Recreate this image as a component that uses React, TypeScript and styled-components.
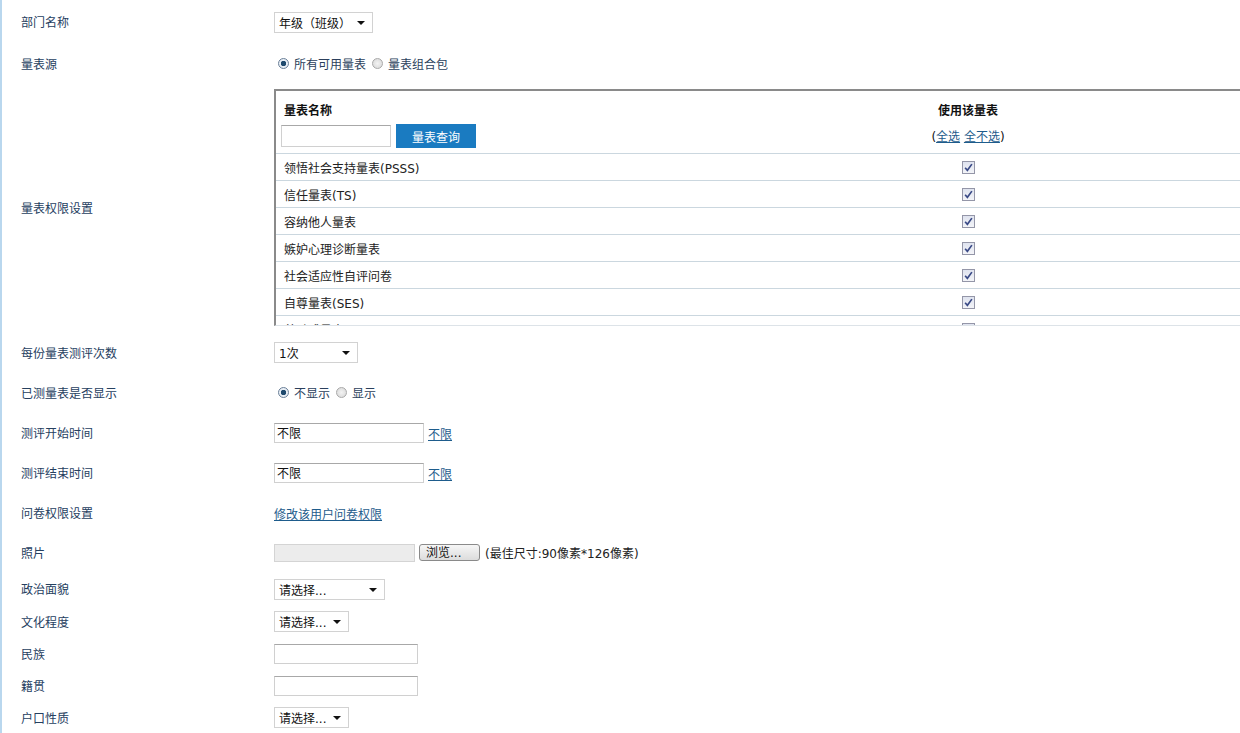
import * as React from 'react';
import styled, { createGlobalStyle } from 'styled-components';

const GlobalStyle = createGlobalStyle`
  html, body {
    margin: 0;
    padding: 0;
    background: #fff;
    overflow: hidden;
  }
  body {
    font-family: 'DejaVu Sans', 'Noto Sans CJK SC', sans-serif;
    font-size: 12px;
    color: #222;
  }
`;

const Page = styled.div`
  position: relative;
  width: 1240px;
  height: 733px;
  border-left: 2px solid #b9d7ee;
  box-sizing: border-box;
  overflow: hidden;
`;

const RailMark = styled.span<{ $top: number; $h: number }>`
  position: absolute;
  left: -2px;
  top: ${({ $top }) => $top}px;
  width: 2px;
  height: ${({ $h }) => $h}px;
  background: #5b9fd3;
`;

const Row = styled.div<{ $h: number; $pad?: number; $padBottom?: number }>`
  display: grid;
  grid-template-columns: 272px 1fr;
  align-items: center;
  height: ${({ $h }) => $h}px;
  padding-top: ${({ $pad }) => $pad ?? 0}px;
  padding-bottom: ${({ $padBottom }) => $padBottom ?? 0}px;
  box-sizing: border-box;
`;

const Label = styled.div`
  padding-left: 19px;
  padding-top: 3px;
  color: #26405f;
  font-size: 12px;
  line-height: 16px;
`;

const Value = styled.div<{ $top?: boolean }>`
  display: flex;
  align-items: center;
  align-self: ${({ $top }) => ($top ? 'start' : 'center')};
  gap: 4px;
  min-width: 0;
  padding-top: 1px;
`;

const Select = styled.div<{ $w: number }>`
  position: relative;
  width: ${({ $w }) => $w}px;
  height: 21px;
  box-sizing: border-box;
  border: 1px solid #d2d2d2;
  display: flex;
  align-items: center;
  padding-left: 4px;
  color: #111;
  background: #fff;
  &::after {
    content: '';
    position: absolute;
    right: 7px;
    top: 8px;
    border-left: 4px solid transparent;
    border-right: 4px solid transparent;
    border-top: 4px solid #111;
  }
`;

const RadioGroup = styled.div`
  display: flex;
  align-items: center;
  padding-left: 4px;
  color: #2b3f5c;
`;

const RadioItem = styled.label`
  display: flex;
  align-items: center;
  margin-right: 6px;
`;

const RadioDot = styled.span<{ $on?: boolean }>`
  width: 11px;
  height: 11px;
  border-radius: 50%;
  box-sizing: border-box;
  border: 1px solid ${({ $on }) => ($on ? '#6a7f98' : '#a9a9a9')};
  background: ${({ $on }) =>
    $on
      ? 'radial-gradient(circle, #1f4a6e 0 2.5px, #e8eef5 3px)'
      : 'radial-gradient(circle, #f3f3f3, #d6d6d6)'};
  margin-right: 5px;
`;

const Box = styled.div`
  width: 1000px;
  height: 237px;
  border-top: 2px solid #8a8a8a;
  border-left: 2px solid #8a8a8a;
  border-bottom: 1px solid #dde3e8;
  box-sizing: border-box;
  overflow: hidden;
`;

const TableRow = styled.div<{ $head?: boolean }>`
  display: flex;
  height: ${({ $head }) => ($head ? 63 : 27)}px;
  border-bottom: 1px solid #cbd7df;
  box-sizing: border-box;
`;

const NameCell = styled.div`
  width: 578px;
  display: flex;
  align-items: center;
  padding-left: 8px;
  box-sizing: border-box;
`;

const UseCell = styled.div`
  width: 228px;
  display: flex;
  align-items: center;
  justify-content: center;
`;

const HeadName = styled.div`
  width: 578px;
  padding: 12px 0 0 5px;
  box-sizing: border-box;
`;

const HeadUse = styled.div`
  width: 228px;
  padding-top: 12px;
  display: flex;
  flex-direction: column;
  align-items: center;
`;

const HeadTitle = styled.div<{ $indent?: number }>`
  font-weight: bold;
  line-height: 16px;
  color: #111;
  padding-left: ${({ $indent }) => $indent ?? 0}px;
`;

const SearchLine = styled.div`
  display: flex;
  align-items: center;
  gap: 5px;
  margin-top: 5px;
`;

const TextInput = styled.div<{ $w: number; $h?: number }>`
  width: ${({ $w }) => $w}px;
  height: ${({ $h }) => $h ?? 20}px;
  box-sizing: border-box;
  border: 1px solid #d0d0d0;
  border-top-color: #a8a8a8;
  display: flex;
  align-items: center;
  padding-left: 2px;
  color: #111;
  background: #fff;
`;

const BlueButton = styled.div`
  width: 80px;
  height: 24px;
  background: #1a7bc1;
  color: #fff;
  display: flex;
  align-items: center;
  justify-content: center;
`;

const PickLine = styled.div`
  margin-top: 10px;
  line-height: 16px;
  color: #111;
`;

const Link = styled.a`
  color: #1e5c8c;
  text-decoration: underline;
  cursor: pointer;
  padding-top: 2px;
`;

const Check = styled.span`
  width: 13px;
  height: 13px;
  box-sizing: border-box;
  border: 1px solid #9496a8;
  background: linear-gradient(#dfe3ef, #f3f4f8);
  display: flex;
  align-items: center;
  justify-content: center;
`;

const FileBox = styled.div`
  width: 141px;
  height: 18px;
  background: #ececec;
  border: 1px solid #d4d4d4;
  box-sizing: border-box;
`;

const FileButton = styled.div`
  width: 61px;
  height: 17px;
  box-sizing: border-box;
  border: 1px solid #8a8a8a;
  border-radius: 3px;
  background: linear-gradient(#f6f6f6, #dcdcdc);
  display: flex;
  align-items: center;
  padding-left: 6px;
  color: #111;
  line-height: 14px;
`;

const Hint = styled.span`
  color: #222;
  margin-left: 1px;
`;

const scales = [
  '领悟社会支持量表(PSSS)',
  '信任量表(TS)',
  '容纳他人量表',
  '嫉妒心理诊断量表',
  '社会适应性自评问卷',
  '自尊量表(SES)',
  '羞耻感量表(ISS)',
];

function CheckMark() {
  return (
    <Check>
      <svg width='9' height='9' viewBox='0 0 8 8'>
        <path d='M1 4.2 L3 6.5 L7 1' stroke='#3a4a86' strokeWidth='1.5' fill='none' />
      </svg>
    </Check>
  );
}

function ScaleTable() {
  return (
    <Box>
      <TableRow $head>
        <HeadName>
          <HeadTitle $indent={3}>量表名称</HeadTitle>
          <SearchLine>
            <TextInput $w={110} $h={22} />
            <BlueButton>量表查询</BlueButton>
          </SearchLine>
        </HeadName>
        <HeadUse>
          <HeadTitle>使用该量表</HeadTitle>
          <PickLine>
            (<Link>全选</Link> <Link>全不选</Link>)
          </PickLine>
        </HeadUse>
      </TableRow>
      {scales.map((s) => (
        <TableRow key={s}>
          <NameCell>{s}</NameCell>
          <UseCell>
            <CheckMark />
          </UseCell>
        </TableRow>
      ))}
    </Box>
  );
}

export default function App() {
  return (
    <>
      <GlobalStyle />
      <Page>
        <RailMark $top={0} $h={35} />
        <RailMark $top={133} $h={10} />
        <RailMark $top={151} $h={11} />

        <Row $h={43}>
          <Label>部门名称</Label>
          <Value>
            <Select $w={99}>年级（班级）</Select>
          </Value>
        </Row>
        <Row $h={40}>
          <Label>量表源</Label>
          <Value>
            <RadioGroup>
              <RadioItem>
                <RadioDot $on />
                所有可用量表
              </RadioItem>
              <RadioItem>
                <RadioDot />
                量表组合包
              </RadioItem>
            </RadioGroup>
          </Value>
        </Row>
        <Row $h={249} $pad={5} $padBottom={8}>
          <Label>量表权限设置</Label>
          <Value $top>
            <ScaleTable />
          </Value>
        </Row>
        <Row $h={40}>
          <Label>每份量表测评次数</Label>
          <Value>
            <Select $w={84}>1次</Select>
          </Value>
        </Row>
        <Row $h={40}>
          <Label>已测量表是否显示</Label>
          <Value>
            <RadioGroup>
              <RadioItem>
                <RadioDot $on />
                不显示
              </RadioItem>
              <RadioItem>
                <RadioDot />
                显示
              </RadioItem>
            </RadioGroup>
          </Value>
        </Row>
        <Row $h={40}>
          <Label>测评开始时间</Label>
          <Value>
            <TextInput $w={150}>不限</TextInput>
            <Link>不限</Link>
          </Value>
        </Row>
        <Row $h={40}>
          <Label>测评结束时间</Label>
          <Value>
            <TextInput $w={150}>不限</TextInput>
            <Link>不限</Link>
          </Value>
        </Row>
        <Row $h={40}>
          <Label>问卷权限设置</Label>
          <Value>
            <Link>修改该用户问卷权限</Link>
          </Value>
        </Row>
        <Row $h={40}>
          <Label>照片</Label>
          <Value>
            <FileBox />
            <FileButton>浏览...</FileButton>
            <Hint>(最佳尺寸:90像素*126像素)</Hint>
          </Value>
        </Row>
        <Row $h={33}>
          <Label>政治面貌</Label>
          <Value>
            <Select $w={111}>请选择...</Select>
          </Value>
        </Row>
        <Row $h={32}>
          <Label>文化程度</Label>
          <Value>
            <Select $w={75}>请选择...</Select>
          </Value>
        </Row>
        <Row $h={32}>
          <Label>民族</Label>
          <Value>
            <TextInput $w={144} />
          </Value>
        </Row>
        <Row $h={32}>
          <Label>籍贯</Label>
          <Value>
            <TextInput $w={144} />
          </Value>
        </Row>
        <Row $h={32}>
          <Label>户口性质</Label>
          <Value>
            <Select $w={75}>请选择...</Select>
          </Value>
        </Row>
      </Page>
    </>
  );
}
